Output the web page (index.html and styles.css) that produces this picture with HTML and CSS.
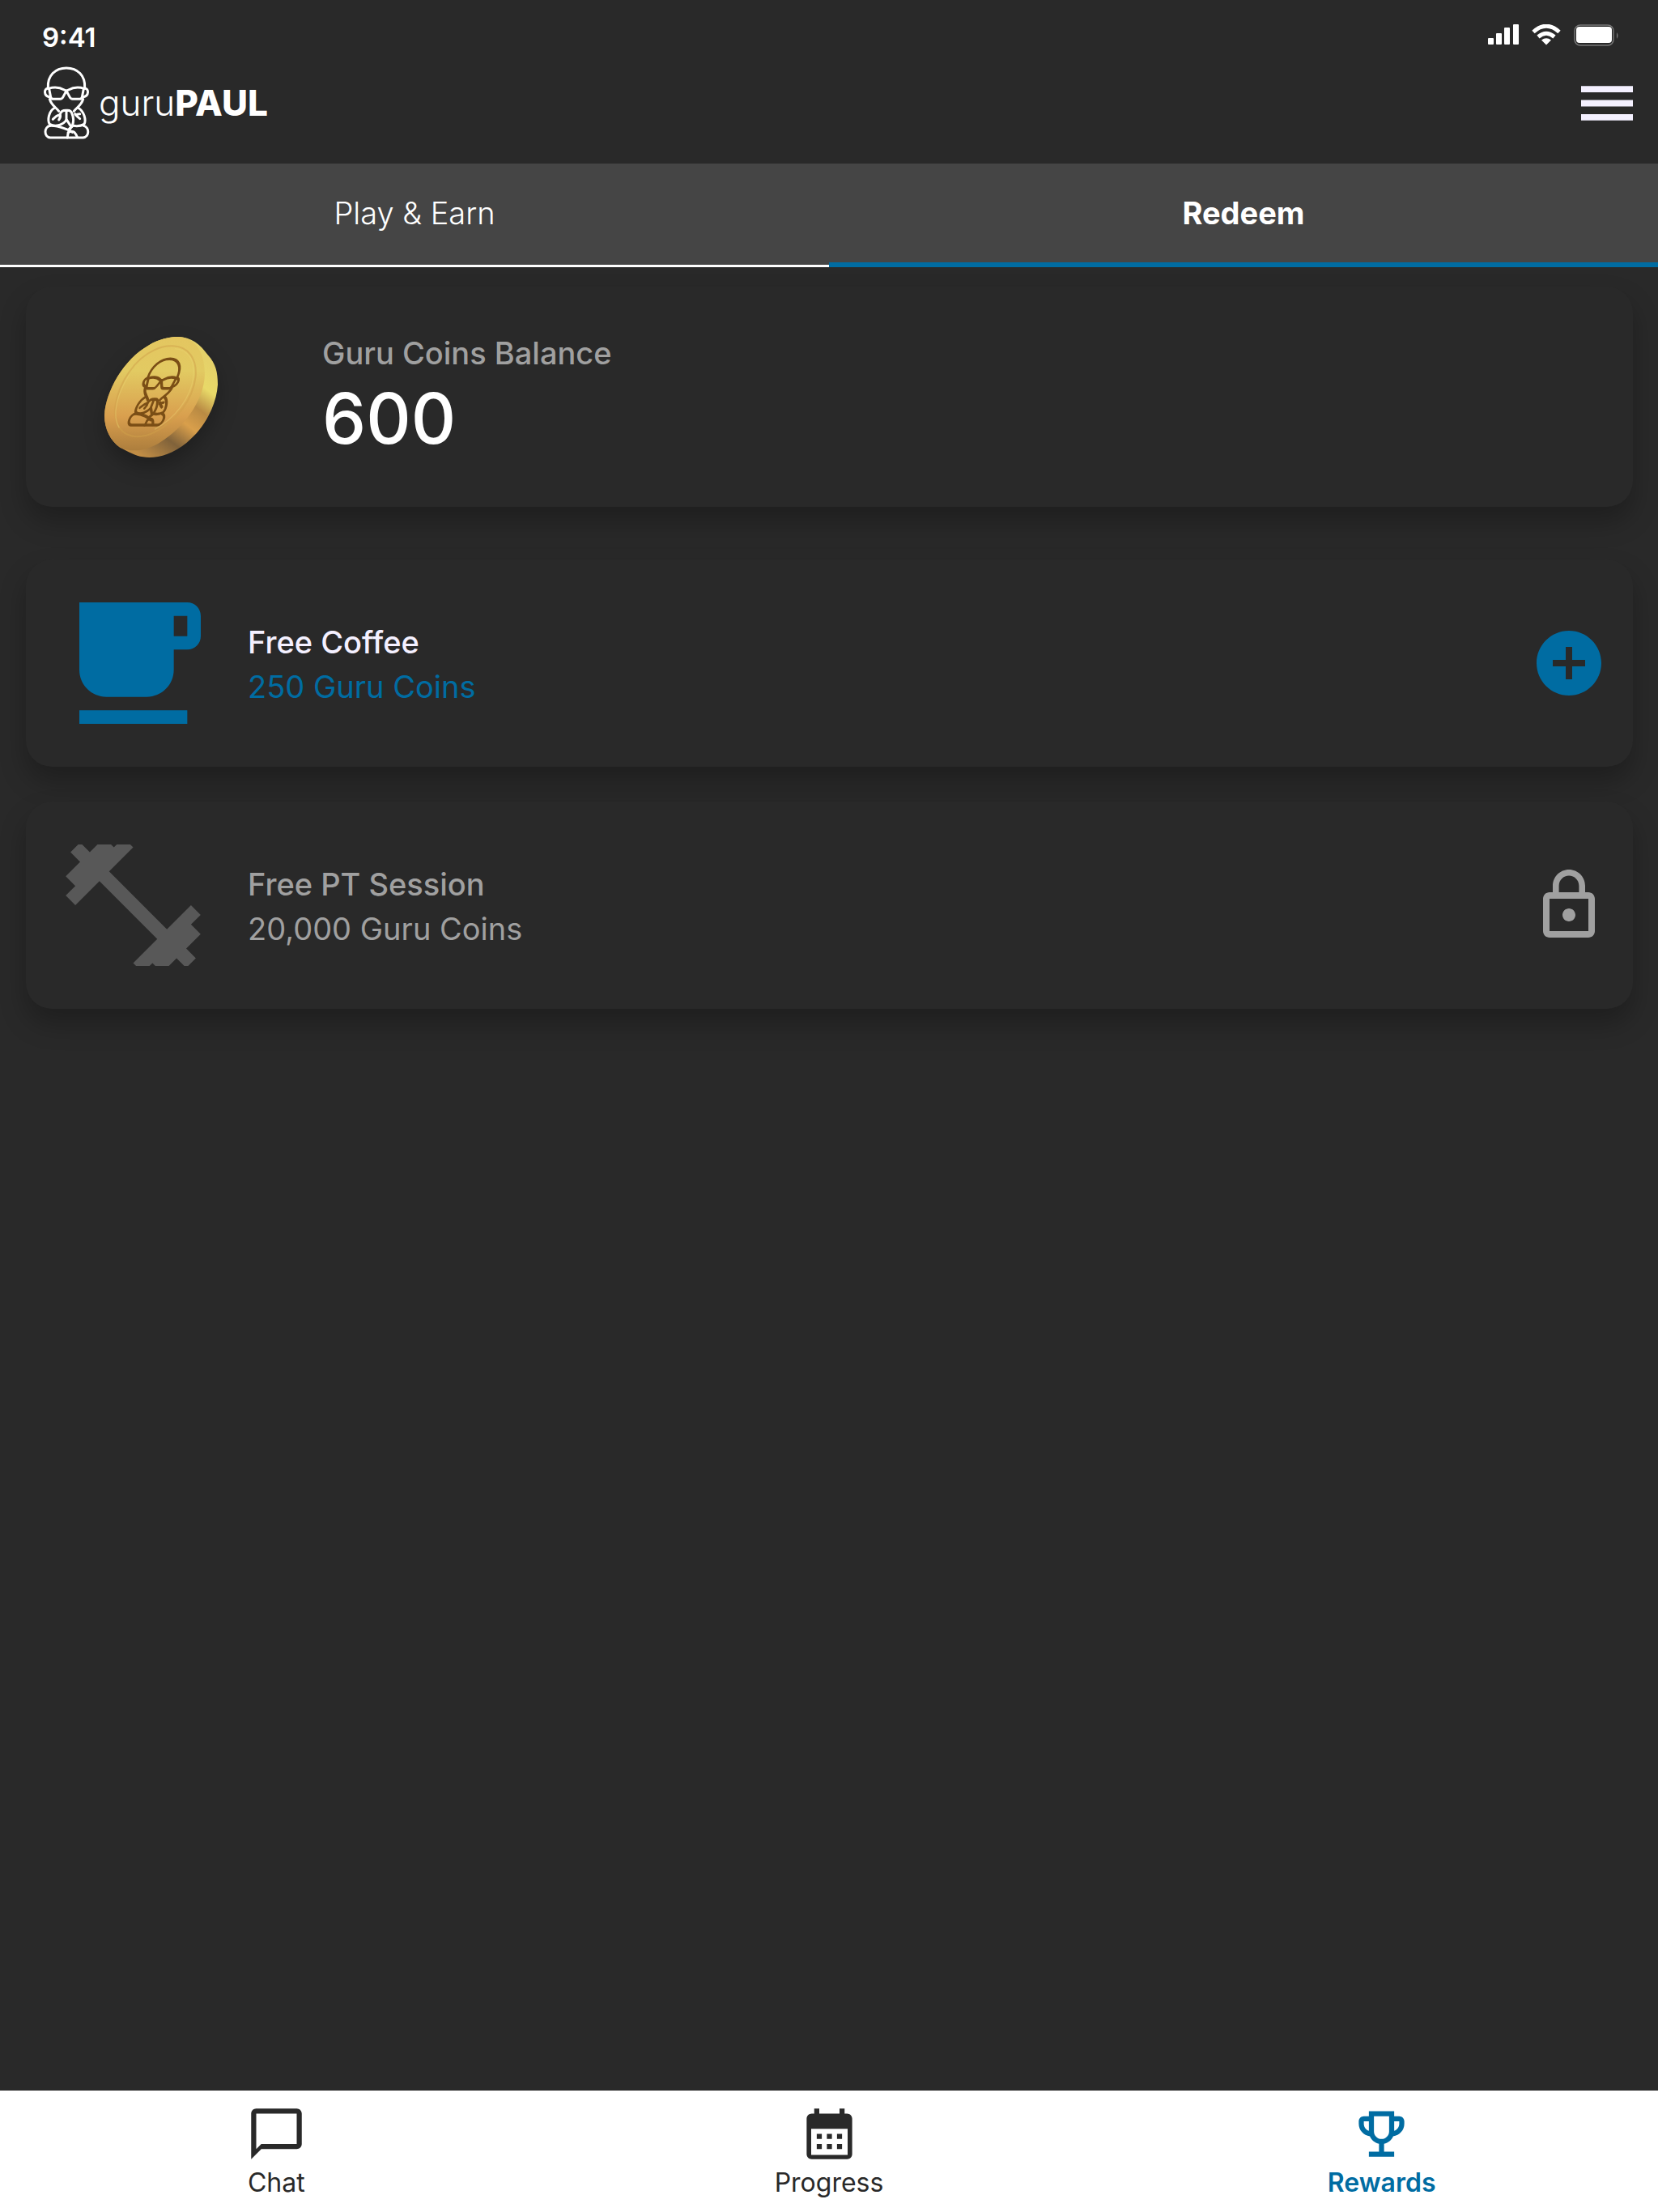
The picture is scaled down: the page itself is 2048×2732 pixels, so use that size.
FILE: index.html
```html
<!DOCTYPE html>
<html lang="en">

<head>
    <meta charset="UTF-8">
    <meta name="viewport" content="width=device-width, initial-scale=1.0">
    <title>guruPAUL - Rewards</title>
    <link rel="stylesheet" href="styles.css">
</head>

<body>
    <!-- guru figure, shared by the logo and the coin -->
    <svg class="sprite" aria-hidden="true">
        <symbol id="guru" viewBox="36 33 180 276">
            <g id="guru-lines" fill="none" stroke="currentColor" stroke-linecap="round" stroke-linejoin="round">
                <path d="M58 116C55 70 85 42 126 42s71 28 68 74" />
                <path d="M60 118Q92 108 118 123Q126 128 134 123Q160 108 192 118" />
                <path d="M62 119L68 150Q70 157 77 157H103Q110 157 114 149L124 130" />
                <path d="M190 119L184 150Q182 157 175 157H149Q142 157 138 149L128 130" />
                <path d="M58 118C42 117 42 145 62 149M194 118C210 117 210 145 190 149" />
                <path d="M64 157C70 180 88 188 98 202M188 157C182 180 164 188 154 202" />
                <path d="M82 190C60 203 55 235 64 250C88 264 116 250 126 234M170 190C192 203 200 235 192 250C178 258 164 258 152 256" />
                <path d="M76 232Q88 218 103 214Q106 224 98 234M176 230Q168 224 158 212M176 212Q166 212 160 216" />
                <path d="M103 212Q108 198 126 199V232L140 254M126 199Q144 197 147 212Q156 232 148 256L136 268" />
                <path d="M66 256C42 260 42 297 66 300H188C212 297 212 262 190 256" />
                <path d="M66 256C98 254 140 274 148 280M130 300Q132 270 148 258M132 282Q154 266 166 298" />
            </g>
        </symbol>
    </svg>

    <header class="header">
        <div class="status-bar">
            <span class="time">9:41</span>
            <div class="status-icons">
                <svg width="38" height="26" viewBox="0 0 38 26" fill="#fff" aria-hidden="true">
                    <rect y="17" width="7" height="8" rx="1" />
                    <rect x="10" y="11" width="7" height="14" rx="1" />
                    <rect x="20" y="4" width="7" height="21" rx="1" />
                    <rect x="31" width="7" height="25" rx="1" />
                </svg>
                <svg width="36" height="26" viewBox="0 0 36 26" aria-hidden="true">
                    <path d="M2 9.500Q18 -5 34 9.500M8 15.500Q18 7 28 15.500" fill="none" stroke="#fff" stroke-width="5" />
                    <path d="M12 19.500Q18 15 24 19.500L18 25.500z" fill="#fff" />
                </svg>
                <svg width="56" height="28" viewBox="0 0 56 28" aria-hidden="true">
                    <rect x="1" y="1" width="48" height="25" rx="7" fill="none" stroke="#777" stroke-width="1.500" />
                    <rect x="3" y="3" width="44" height="20" rx="4" fill="#fff" />
                    <path d="M53 10q3 4 0 8z" fill="#777" />
                </svg>
            </div>
        </div>
        <div class="top-bar">
            <a class="logo" href="#" aria-label="guruPAUL home">
                <svg class="logo-figure" aria-hidden="true"><use href="#guru" stroke-width="9" /></svg>
                <span class="logo-text">guru<b>PAUL</b></span>
            </a>
            <button class="menu-button" type="button" aria-label="Open menu">
                <svg width="64" height="43" viewBox="3 6 18 12" fill="currentColor" aria-hidden="true">
                    <path d="M3 18h18v-2.200H3zM3 13.100h18v-2.200H3zM3 6v2.200h18V6z" />
                </svg>
            </button>
        </div>
    </header>

    <div class="tabs" role="tablist">
        <button class="tab" type="button" role="tab" aria-selected="false">Play &amp; Earn</button>
        <button class="tab active" type="button" role="tab" aria-selected="true">Redeem</button>
    </div>

    <main class="content">
        <section class="card balance">
            <svg class="coin" viewBox="0 0 540 540" aria-hidden="true">
                <defs>
                    <linearGradient id="coin-face" x1="0" y1="0" x2="0" y2="1">
                        <stop offset="0" stop-color="#e4c660" />
                        <stop offset="0.3" stop-color="#e2ca62" />
                        <stop offset="0.7" stop-color="#d99f4e" />
                        <stop offset="1" stop-color="#ad7e3d" />
                    </linearGradient>
                    <linearGradient id="coin-edge" x1="0.900" y1="0.200" x2="0.350" y2="1">
                        <stop offset="0" stop-color="#e5d169" />
                        <stop offset="0.2" stop-color="#e8d968" />
                        <stop offset="0.38" stop-color="#b98a43" />
                        <stop offset="0.55" stop-color="#d99f4b" />
                        <stop offset="0.75" stop-color="#80623a" />
                        <stop offset="1" stop-color="#c18d45" />
                    </linearGradient>
                </defs>
                <path fill="url(#coin-edge)" d="M330 48C378 48 412 76 440 115C470 148 477 180 477 225C472 300 430 385 362 440C305 487 245 500 200 493C170 488 148 475 115 458C80 435 57 390 57 340C60 250 130 130 220 80C260 55 300 48 330 48Z" />
                <path fill="url(#coin-face)" d="M330 48C395 50 434 110 428 200C420 290 350 385 265 438C215 470 160 478 115 458C80 435 57 390 57 340C60 250 130 130 220 80C260 55 300 48 330 48Z" />
                <path fill="none" stroke="#cfa04a" stroke-opacity="0.5" stroke-width="6" d="M310 82C370 84 400 130 395 195C385 280 325 360 245 400C200 424 150 424 122 396C98 370 92 335 98 300C112 215 170 130 240 98C264 86 288 81 310 82Z" />
                <path fill="none" stroke="#ecd473" stroke-opacity="0.4" stroke-width="4" d="M318 92C368 96 394 135 387 195C377 274 320 350 243 391M112 385C82 335 106 255 150 187" />
                <use href="#guru-lines" class="coin-figure" stroke-width="11" transform="matrix(0.8 0 -0.37 0.95 214 90)" />
            </svg>
            <div class="balance-text">
                <p class="balance-label">Guru Coins Balance</p>
                <p class="balance-value">600</p>
            </div>
        </section>

        <ul class="rewards">
            <li class="card reward">
                <div class="reward-icon">
                    <svg width="150" height="150" viewBox="4 3 18 18" fill="currentColor" aria-hidden="true">
                        <path d="M20 3H4v10c0 2.210 1.790 4 4 4h6c2.210 0 4-1.790 4-4v-3h2c1.110 0 2-.89 2-2V5c0-1.110-.89-2-2-2zm0 5h-2V5h2v3zM4 19h16v2H4z" />
                    </svg>
                </div>
                <div class="reward-text">
                    <h2>Free Coffee</h2>
                    <p>250 Guru Coins</p>
                </div>
                <button class="reward-action" type="button" aria-label="Redeem Free Coffee">
                    <svg width="96" height="96" viewBox="0 0 24 24" fill="currentColor" aria-hidden="true">
                        <path d="M12 2C6.480 2 2 6.480 2 12s4.480 10 10 10 10-4.480 10-10S17.520 2 12 2zm5 11h-4v4h-2v-4H7v-2h4V7h2v4h4v2z" />
                    </svg>
                </button>
            </li>
            <li class="card reward locked">
                <div class="reward-icon">
                    <svg width="167" height="150" viewBox="2 3 20 18" fill="currentColor" aria-hidden="true">
                        <path d="M20.570 14.860L22 13.430 20.570 12 17 15.570 8.430 7 12 3.430 10.570 2 9.140 3.430 7.710 2 5.570 4.140 4.140 2.710 2.710 4.140l1.430 1.430L2 7.710l1.430 1.430L2 10.570 3.430 12 7 8.430 15.570 17 12 20.570 13.430 22l1.430-1.430L16.290 22l2.140-2.140 1.430 1.430 1.430-1.430-1.430-1.430L22 16.290z" />
                    </svg>
                </div>
                <div class="reward-text">
                    <h2>Free PT Session</h2>
                    <p>20,000 Guru Coins</p>
                </div>
                <button class="reward-action" type="button" aria-label="Free PT Session is locked" disabled>
                    <svg width="96" height="96" viewBox="0 0 24 24" fill="currentColor" aria-hidden="true">
                        <path d="M12 17c1.100 0 2-.9 2-2s-.9-2-2-2-2 .9-2 2 .9 2 2 2zm6-9h-1V6c0-2.760-2.240-5-5-5S7 3.240 7 6v2H6c-1.100 0-2 .9-2 2v10c0 1.100.9 2 2 2h12c1.100 0 2-.9 2-2V10c0-1.100-.9-2-2-2zM8.900 6c0-1.710 1.390-3.100 3.100-3.100s3.100 1.390 3.100 3.100v2H8.900V6zM18 20H6V10h12v10z" />
                    </svg>
                </button>
            </li>
        </ul>
    </main>

    <nav class="bottom-nav">
        <a class="nav-link" href="#chat">
            <svg width="75" height="75" viewBox="0 0 24 24" fill="currentColor" aria-hidden="true">
                <path d="M20 2H4c-1.100 0-2 .9-2 2v18l4-4h14c1.100 0 2-.9 2-2V4c0-1.100-.9-2-2-2zm0 14H6l-2 2V4h16v12z" />
            </svg>
            Chat
        </a>
        <a class="nav-link" href="#progress">
            <svg width="75" height="75" viewBox="0 0 24 24" fill="currentColor" aria-hidden="true">
                <path fill-rule="evenodd" d="M6 2h2v2h8V2h2v2h1c1.100 0 2 .9 2 2v14c0 1.100-.9 2-2 2H5c-1.100 0-2-.9-2-2V6c0-1.100.9-2 2-2h1zM4.800 10v10.300h14.400V10z" />
                <path d="M7 12h2v2H7zM11 12h2v2h-2zM15 12h2v2h-2zM7 16h2v2H7zM11 16h2v2h-2zM15 16h2v2h-2z" />
            </svg>
            Progress
        </a>
        <a class="nav-link active" href="#rewards" aria-current="page">
            <svg width="75" height="75" viewBox="0 0 24 24" fill="currentColor" aria-hidden="true">
                <path d="M19 5h-2V3H7v2H5c-1.100 0-2 .9-2 2v1c0 2.550 1.920 4.630 4.390 4.940.63 1.500 1.980 2.630 3.610 2.960V19H7v2h10v-2h-4v-3.100c1.630-.33 2.980-1.460 3.610-2.960C19.080 12.630 21 10.550 21 8V7c0-1.100-.9-2-2-2zM5 8V7h2v3.820C5.840 10.400 5 9.300 5 8zm7 6c-1.650 0-3-1.350-3-3V5h6v6c0 1.650-1.350 3-3 3zm7-6c0 1.300-.84 2.400-2 2.820V7h2v1z" />
            </svg>
            Rewards
        </a>
    </nav>
</body>

</html>
```

FILE: styles.css
```css
* {
    box-sizing: border-box;
}

body {
    display: flex;
    flex-direction: column;
    min-height: 100vh;
    margin: 0;
    background: #292929;
    color: #fff;
    font-family: Inter, "Liberation Sans", sans-serif;
    font-size: 38px;
}

h2,
p,
ul {
    margin: 0;
    padding: 0;
}

button {
    padding: 0;
    border: none;
    background: none;
    color: inherit;
    font: inherit;
}

a {
    color: inherit;
    text-decoration: none;
}

svg {
    display: block;
}

.sprite {
    position: absolute;
    width: 0;
    height: 0;
}

/* Header */
.header {
    padding: 26px 31px 28px 52px;
}

.status-bar {
    display: flex;
    justify-content: space-between;
    align-items: flex-start;
    height: 54px;
    padding-right: 17px;
}

.time {
    font-size: 33px;
    font-weight: 600;
    line-height: 40px;
}

.status-icons {
    display: flex;
    gap: 16px;
    padding-top: 4px;
}

.top-bar {
    display: flex;
    justify-content: space-between;
    align-items: center;
}

.logo {
    display: flex;
    align-items: center;
    gap: 10px;
}

.logo-figure {
    width: 60px;
    height: 94px;
}

.logo-text {
    font-size: 44px;
    font-weight: 300;
}

.logo-text b {
    font-weight: 800;
}

.menu-button {
    color: #f4f0ff;
}

/* Tabs */
.tabs {
    display: flex;
    background: #454545;
}

.tab {
    flex: 1;
    height: 128px;
    padding-bottom: 3px;
    border-bottom: 3px solid #fff;
    font-weight: 300;
}

.tab.active {
    padding-bottom: 0;
    border-bottom: 6px solid #006ca2;
    font-weight: 700;
}

/* Cards */
.content {
    flex: 1;
    padding: 24px 31px 24px 32px;
}

.card {
    display: flex;
    align-items: center;
    border-radius: 32px;
    background: #292929;
    box-shadow: 0 18px 32px rgba(0, 0, 0, 0.25);
}

.balance {
    gap: 108px;
    height: 272px;
    margin-bottom: 65px;
    padding-left: 78px;
}

.coin {
    width: 180px;
    height: 180px;
    filter: drop-shadow(0 12px 12px rgba(0, 0, 0, 0.25));
}

.coin-figure {
    color: #7a4e16;
}

.balance-text {
    padding-top: 6px;
}

.balance-label {
    color: #a0a0a0;
    font-weight: 500;
    line-height: 48px;
}

.balance-value {
    font-size: 86px;
    font-weight: 500;
    line-height: 114px;
}

.rewards {
    display: flex;
    flex-direction: column;
    gap: 43px;
    list-style: none;
}

.reward {
    gap: 58px;
    height: 256px;
    padding: 0 31px 0 48px;
}

.reward-icon {
    display: flex;
    justify-content: flex-end;
    width: 168px;
    color: #006ca2;
}

.reward-text {
    flex: 1;
    padding-top: 4px;
    color: #006ca2;
    line-height: 55px;
}

.reward-text h2 {
    color: #f4f0ff;
    font-size: 38px;
    font-weight: 500;
}

.reward-action {
    color: #006ca2;
}

.locked .reward-text,
.locked .reward-text h2,
.locked .reward-action {
    color: #a0a0a0;
}

.locked .reward-icon {
    color: #585858;
}

/* Bottom navigation */
.bottom-nav {
    display: flex;
    height: 150px;
    background: #fff;
    color: #292929;
}

.nav-link {
    display: flex;
    flex: 1;
    flex-direction: column;
    align-items: center;
    padding-top: 16px;
    font-size: 32px;
    line-height: 46px;
}

.nav-link.active {
    color: #006ca2;
    font-weight: 600;
}
```
